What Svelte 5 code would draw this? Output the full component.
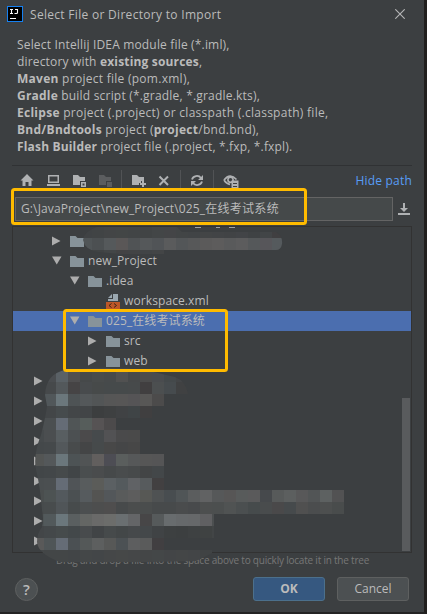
<script>
  const intro = [
    { id: "l1", parts: [["Select Intellij IDEA module file (*.iml),", false]] },
    { id: "l2", parts: [["directory with ", false], ["existing sources", true], [",", false]] },
    { id: "l3", parts: [["Maven", true], [" project file (pom.xml),", false]] },
    { id: "l4", parts: [["Gradle", true], [" build script (*.gradle, *.gradle.kts),", false]] },
    { id: "l5", parts: [["Eclipse", true], [" project (.project) or classpath (.classpath) file,", false]] },
    { id: "l6", parts: [["Bnd/Bndtools", true], [" project (", false], ["project", true], ["/bnd.bnd),", false]] },
    { id: "l7", parts: [["Flash Builder", true], [" project file (.project, *.fxp, *.fxpl).", false]] },
  ];

  const rows = [
    { level: 1, state: "closed", icon: "folder", name: "" },
    { level: 1, state: "open", icon: "folder", name: "new_Project" },
    { level: 2, state: "open", icon: "folder", name: ".idea" },
    { level: 3, state: "leaf", icon: "xml", name: "workspace.xml" },
    { level: 2, state: "open", icon: "folder", name: "025_在线考试系统", selected: true },
    { level: 3, state: "closed", icon: "folder", name: "src" },
    { level: 3, state: "closed", icon: "folder", name: "web" },
    ...Array.from({ length: 9 }, () => ({ level: 0, state: "closed", icon: "", name: "" })),
  ];

  // censored names, one colour per 12px cell
  const top = [
    "404345 414445 434546 434646 424546 414445 434647 444547 424546 414446 434546 424446 414345 424447 3f4244 424547 403f41 3e4143 3f4244",
    "505557 4c5052 55595b 5a5757 505355 55585a 515457 5a5b5c 535658 575859 5b5a5a 5d5c5c 595a5b 5c5c5d 55585a 57565a 555a5d 595a5b 58575a 4e504e",
    "404345 404344 434647 434344 424445 414446 434546 444647 424446 424547 434547",
  ].map((r) => r.split(" "));

  const bottom = [
    "45484a 4a4d50 5a6166 504f50 46494a 494c4c 474a4b 515151 47494a 4c4c4c 4a4c4f 44494b 434547",
    "44474a 46494b 53585b 464445 484b4d 474a4a 464a4b 464a4b 474a4b 413f40 4c4f50 464b4e 404142",
    "4d5254 51575a 6b777c 4e5355 54585a 525556 565656 575656 555456 585756 4c4b4b",
    "424547 434648 464b4d 434648 424547 3c3e3f 3e4041 404244 3f4446 403f40",
    "4a4e50 4b4f51 656c76 505556 565d5b 565354 4c4a4b",
    "464a4c 4b4e50 585e61 4c5052 4b4a4b 464a4c 525254 4a4a4b 4a4a4a",
    "44484a 45494b 53585b 484b4c 444546 464a4b 484848 454647 474747",
    "535554 54585a 6b777c 4d5355 515455 625f5e 4d4d54 5a5e5d 565859 565656 555556",
    "424648 434749 464a4b 414547 4a4e4f 4a4c4d 46494a 494c4d 474a4b 434546 434749",
    "4a4e50 4b4f51 656c76 505457 585c5d 5b5c59 5b6063 545a5d 606265 575b5d 424041",
    "4a4e4e 4d5353 53595d 4b5052 565b5e 545452 53575a 595b5b 5d5d5d 575855 4f5253 484d50 505557 5b5d5e 616263 565859 575656 585b5b 5a5a5b 46494c 575a5a 5c5f5f 585859 525556 5d6161 525253",
    "474b4c 484c4d 505558 474b4c 4c4f50 4d4e4e 4f4e4e 474a4b 4b4d4d 4a4d4d 474a4b 474a4b 4a4c4d 484a4c 4d4f4f 4c4f4f 505353 4b4f50 464b4c 494c4d 4a494a 464a4c 505050 4b4d4e 4d4f4f 494c4c",
    "4f5556 52595b 6b777c 5a5f60 646664 6a6a69 6c6d6b 6a6f71 646567 474647 565a5b 686c6e 66696b 66686a 606062 4c4f50 555757",
    "434648 44484a 464b4c 43484a 484b4d 414446 464a4b 434748 46494b 44484a 404345 3d4041 3c3f40 3e4142 3f4242 424546",
    "595959 4f5557 656c76 4b5053 545858 5d5f5f 575857 4c5154 5d5e5f 5a5b5b 413f41",
    "444748 434647 434647 424547 444748 434648 454748 464848 454748 444647 444748 434547 444647 434547 404344",
  ].map((r) => r.split(" "));
</script>

<svelte:head>
  <title>Select File or Directory to Import</title>
</svelte:head>

{#snippet folder()}
  <svg class="icon" width="16" height="16" viewBox="0 0 16 16">
    <path fill="#87939a" d="M1 3h5.500l2 2H15v9H1z" />
  </svg>
{/snippet}

<div class="dialog">
  <header>
    <svg class="logo" width="16" height="16" viewBox="0 0 16 16">
      <rect x=".5" y=".5" width="15" height="15" fill="#000" stroke="#1680f0" />
      <path d="M3 3.500h3M4.500 3v5M3 7.500h3M8 3.500h3M10.500 3v3.500q0 1-1 1H7.500M3 12.500h6" fill="none" stroke="#fff" stroke-width="1.100" />
    </svg>
    <h1>Select File or Directory to Import</h1>
    <svg class="close" width="10" height="10" viewBox="0 0 10 10">
      <path d="M.3.3l9.400 9.400M9.700.3L.3 9.700" stroke="#b5b6b7" stroke-width="1.100" />
    </svg>
  </header>

  <div class="intro">
    {#each intro as line (line.id)}
      <p class={line.id}>{#each line.parts as [text, bold]}{#if bold}<b>{text}</b>{:else}{text}{/if}{/each}</p>
    {/each}
  </div>

  <div class="toolbar">
    <svg width="205" height="20" viewBox="0 0 205 20" fill="#afb1b3">
      <path transform="translate(0 -1)" d="M7 5L13.500 11.500H11.500V17H8.500V13H5.500v4H2.500v-5.500H.5z" />
      <g transform="translate(27 0)">
        <path fill-rule="evenodd" d="M1 5h11v8H1zM2.500 6.500v5h8v-5z" />
        <path d="M0 14h13v2H0z" />
      </g>
      <path d="M53 5h5l2 2h5v4h-5v4h-7zM61 12h5v5h-5z" />
      <path fill="#3c3f41" d="M62.500 13.500h2v2h-2z" />
      <g fill="#5b5d5f">
        <path d="M79 5h5l2 2h5v4h-5v4h-7zM87 12h5v5h-5z" />
      </g>
      <path fill="#515355" d="M101 0h1v20h-1zM160 0h1v20h-1zM193 0h1v20h-1z" />
      <path d="M112 5h5l2 2h5v4h-3v2h-2v2h-7zM122 11h2v2h2v2h-2v2h-2v-2h-2v-2h2z" />
      <path d="M139.500 6.500l8.500 8.500M148 6.500L139.500 15" fill="none" stroke="#afb1b3" stroke-width="2" />
      <g fill="none" stroke="#afb1b3" stroke-width="1.800">
        <path d="M172 9.500a5 4.600 0 0 1 9-1.500M182 11.500a5 4.600 0 0 1-9 1.500" />
      </g>
      <path d="M183 5v5h-5zM171 16v-5h5z" />
    </svg>
    <svg class="eye" width="17" height="16" viewBox="0 0 17 16" fill="none">
      <path d="M1 6Q7 -1.500 13.500 5.500M1 6q2.500 4 6 4.300" stroke="#afb1b3" stroke-width="1.700" />
      <circle cx="7.500" cy="5.800" r="2.600" stroke="#afb1b3" stroke-width="1.600" />
      <path d="M8.500 6.500h7V15h-7z" fill="#afb1b3" />
      <path d="M10 9.500h4M10 12.500h4" stroke="#3c3f41" />
    </svg>
    <a href="#path">Hide path</a>
  </div>

  <div class="path-row">
    <div class="path"><span class="latin">G:\JavaProject\new_Project\025_</span><span class="cjk">在线考试系统</span></div>
    <svg width="12" height="12" viewBox="0 0 12 12">
      <path d="M5 0h2v5h3L6 9 2 5h3zM0 10h12v2H0z" fill="#afb1b3" />
    </svg>
  </div>

  <div class="tree">
    {#each rows as row}
      <div class="row level-{row.level}" class:selected={row.selected}>
        <svg class="arrow" width="10" height="10" viewBox="0 0 10 10" fill="#adadad">
          {#if row.state === "open"}
            <path d="M0 .5h9.500L4.750 8.500z" />
          {:else if row.state === "closed"}
            <path d="M0 .5l8.500 4.500L0 9.500z" />
          {/if}
        </svg>
        {#if row.icon === "folder"}
          {@render folder()}
        {:else if row.icon === "xml"}
          <svg class="icon" width="16" height="16" viewBox="0 0 16 16">
            <path fill="#9aa7b0" d="M7 1v4H3zM8 1h5v7H3V6h5z" />
            <path fill="#bd5728" d="M1 9h14v7H1z" />
            <path d="M6.500 10.500l-2.500 2 2.500 2M9 10.500l2.500 2-2.500 2" fill="none" stroke="#3b2318" />
          </svg>
        {/if}
        <span class="name">{row.name}</span>
      </div>
    {/each}
    <div class="scrollbar"></div>
  </div>

  <p class="hint">Drag and drop a file into the space above to quickly locate it in the tree</p>

  <footer>
    <button class="help" aria-label="Help">?</button>
    <button class="ok">OK</button>
    <button class="cancel">Cancel</button>
  </footer>

  <svg class="overlay" width="427" height="614" viewBox="0 0 427 614">
    <defs>
      <clipPath id="top-blob">
        <path d="M83 240q1-9 14-13h80l5 5h94q7 4 6 12-1 6-6 6H164v4h-44l-22-2q-13-2-15-12z" />
      </clipPath>
      <clipPath id="bottom-blob">
        <path d="M45 395Q46 373 66 370Q110 366 145 370L175 377Q186 381 188 394H164V406H152V418H350V514H214V552Q203 558 196 561L150 562H60Q38 554 37 542Q37 533 42 527Q44 520 42 510Q40 485 36 470Q33 455 41 435Q46 415 47 406Z" />
      </clipPath>
    </defs>
    <path d="M140 227.500h5M195 227.500h6M216 227.500h4M229 227.500h6" stroke="#a0a2a3" />
    <g clip-path="url(#top-blob)" shape-rendering="crispEdges">
      {#each top as cells, r}
        {#each cells as cell, c}
          <rect x={80 + c * 12 - (c ? 0 : 4)} y={226 + r * 12} width={c ? 12 : 16} height="12" fill="#{cell}" />
        {/each}
      {/each}
    </g>
    <g clip-path="url(#bottom-blob)" shape-rendering="crispEdges">
      <path fill="#45484a" d="M44 365h100v6H44z" />
      {#each bottom as cells, r}
        {#each cells as cell, c}
          <rect x={32 + c * 12} y={370 + r * 12} width="12" height="12" fill="#{cell}" />
        {/each}
      {/each}
    </g>
    <g fill="none" stroke="#ffbb00" stroke-width="3">
      <rect x="12.500" y="189.500" width="293" height="34" rx="2" />
      <rect x="64.500" y="310.500" width="162" height="60" rx="2" />
    </g>
  </svg>
</div>

<style>
  :global(body) {
    background: #211f1e;
  }

  .dialog {
    position: relative;
    box-sizing: border-box;
    display: flex;
    flex-direction: column;
    width: 427px;
    height: 614px;
    overflow: hidden;
    border-right: 3px solid #211f1e;
    border-bottom: 2px solid #232323;
    background: #3c3f41;
    color: #bbbbbb;
    font: 12px "Open Sans", "Noto Sans CJK SC", sans-serif;
  }

  svg {
    display: block;
    flex: none;
  }

  header {
    display: flex;
    align-items: center;
    height: 28px;
    padding: 0 19px 0 7px;
  }

  h1 {
    flex: 1;
    margin: 2px 0 0 7px;
    font-size: 12px;
    font-weight: 400;
    letter-spacing: 0.3px;
    line-height: 18px;
    white-space: nowrap;
  }

  .intro {
    height: 129px;
    margin: 0 12px;
    padding: 8px 5px 0;
    border-bottom: 1px solid #303234;
  }

  .intro p {
    margin: 0;
    letter-spacing: 0.17px;
    line-height: 17px;
    white-space: nowrap;
  }

  .intro .l3,
  .intro .l5,
  .intro .l6 {
    letter-spacing: 0.27px;
  }

  .intro .l4 {
    letter-spacing: 0.2px;
  }

  .toolbar {
    display: flex;
    height: 22px;
    padding: 4px 12px 0 20px;
  }

  .toolbar .eye {
    margin: 4px 0 0 -2px;
  }

  .toolbar a {
    margin-left: auto;
    color: #589df6;
    letter-spacing: 0.2px;
    line-height: 21px;
    text-decoration: none;
  }

  .path-row {
    display: flex;
    align-items: center;
    gap: 5px;
    height: 24px;
    margin-top: 5px;
    padding: 0 14px 0 15px;
  }

  .path {
    box-sizing: border-box;
    width: 378px;
    height: 24px;
    padding-left: 5px;
    border: 1px solid #646464;
    background: #45494a;
    line-height: 22px;
    white-space: nowrap;
  }

  .latin {
    letter-spacing: 0.12px;
  }

  .cjk {
    letter-spacing: 0.3px;
  }

  .tree {
    position: relative;
    box-sizing: border-box;
    width: 400px;
    height: 327px;
    margin: 5px 12px 0;
    padding-top: 4px;
    overflow: hidden;
    border: 1px solid #323232;
  }

  .row {
    display: flex;
    align-items: center;
    height: 20px;
    line-height: 20px;
    padding-left: 21px;
  }

  .level-1 {
    padding-left: 39px;
  }

  .level-2 {
    padding-left: 57px;
  }

  .level-3 {
    padding-left: 75px;
  }

  .selected {
    background: #4b6eaf;
  }

  .icon {
    margin: 0 3px 0 7px;
  }

  .name {
    letter-spacing: 0.1px;
    white-space: nowrap;
  }

  .scrollbar {
    position: absolute;
    top: 171px;
    right: 1px;
    width: 8px;
    height: 153px;
    background: #595b5d;
  }

  .hint {
    margin: 0;
    padding-left: 56px;
    color: #777777;
    font-size: 10px;
    letter-spacing: -0.21px;
    line-height: 14px;
    white-space: nowrap;
  }

  footer {
    display: flex;
    align-items: center;
    margin-top: 10px;
    padding: 0 15px;
  }

  button {
    box-sizing: border-box;
    width: 72px;
    height: 24px;
    padding: 0;
    border: 1px solid #5e6060;
    border-radius: 3px;
    background: #4c5052;
    color: #bbbbbb;
    font: inherit;
    line-height: 20px;
  }

  .help {
    width: 23px;
    height: 23px;
    margin-right: auto;
    border-radius: 50%;
    font-size: 15px;
    font-weight: 600;
  }

  .ok {
    margin-right: 12px;
    border-color: #4c708c;
    background: #365880;
    font-weight: 700;
  }

  .overlay {
    position: absolute;
    top: 0;
    left: 0;
  }
</style>
